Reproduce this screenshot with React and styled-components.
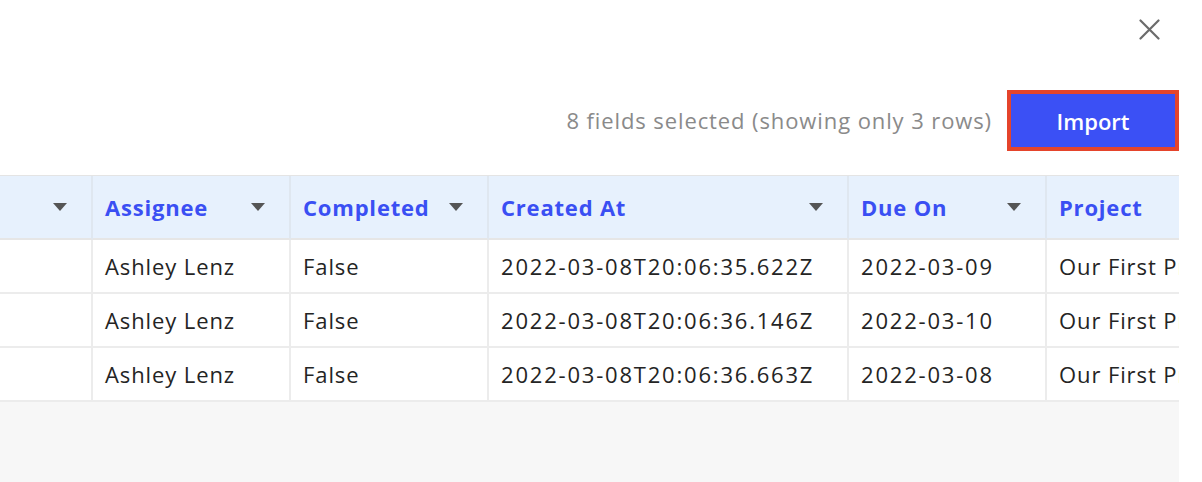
import React from 'react';
import styled, { createGlobalStyle } from 'styled-components';

const Global = createGlobalStyle`
  html, body { margin: 0; padding: 0; background: #fff; }
  body { font-family: "Open Sans", Lato, sans-serif; }
`;

const Page = styled.div`
  width: 1179px;
  height: 482px;
  display: flex;
  flex-direction: column;
  background: #fff;
`;

const TopBar = styled.div`
  height: 58px;
  display: flex;
  justify-content: flex-end;
  align-items: center;
  padding-right: 19px;
`;

const CloseBtn = styled.button`
  border: none;
  background: none;
  padding: 0;
  width: 21px;
  height: 21px;
  display: flex;
  cursor: pointer;
`;

const Toolbar = styled.div`
  height: 117px;
  display: flex;
  justify-content: flex-end;
  align-items: flex-start;
  gap: 15px;
  padding-top: 32px;
  box-sizing: border-box;
`;

const Info = styled.div`
  font-size: 22px;
  color: #8a8a8a;
  line-height: 61px;
  letter-spacing: 0.9px;
`;

const ImportBtn = styled.button`
  width: 172px;
  height: 61px;
  border: 4px solid #e5442b;
  background: #3b50f5;
  color: #fff;
  font-family: "Open Sans", sans-serif;
  font-size: 22px;
  font-weight: 600;
  cursor: pointer;
`;

const TableWrap = styled.div`
  overflow: hidden;
  border-top: 1px solid #e4e4e4;
  flex: 1;
  background: #f7f7f7;
`;

const Grid = styled.div`
  display: grid;
  grid-template-columns: 198px 198px 198px 360px 198px 240px;
  margin-left: -105px;
  width: max-content;
`;

const HeadCell = styled.div`
  height: 64px;
  box-sizing: border-box;
  background: #e7f1fd;
  border-right: 2px solid #dfe7f0;
  border-bottom: 2px solid #e6e6e6;
  display: flex;
  align-items: center;
  justify-content: space-between;
  padding: 0 24px 0 12px;
  font-size: 22px;
  font-weight: 700;
  color: #3a4ff3;
  letter-spacing: 0.8px;
`;

const Caret = styled.span`
  width: 0;
  height: 0;
  border-left: 7px solid transparent;
  border-right: 7px solid transparent;
  border-top: 8px solid #555;
`;

const Cell = styled.div`
  height: 54px;
  box-sizing: border-box;
  background: #fff;
  border-right: 2px solid #ececec;
  border-bottom: 2px solid #ececec;
  display: flex;
  align-items: center;
  padding: 0 12px;
  font-size: 22px;
  letter-spacing: ${(p) => (p.$numeric ? '1.8px' : '0.9px')};
  color: #242424;
  white-space: nowrap;
  overflow: hidden;
`;

const columns = [
  { name: 'Name', caret: true },
  { name: 'Assignee', caret: true },
  { name: 'Completed', caret: true },
  { name: 'Created At', caret: true },
  { name: 'Due On', caret: true },
  { name: 'Project', caret: false },
];

const rows = [
  ['', 'Ashley Lenz', 'False', '2022-03-08T20:06:35.622Z', '2022-03-09', 'Our First Project'],
  ['', 'Ashley Lenz', 'False', '2022-03-08T20:06:36.146Z', '2022-03-10', 'Our First Project'],
  ['', 'Ashley Lenz', 'False', '2022-03-08T20:06:36.663Z', '2022-03-08', 'Our First Project'],
];

const isNumeric = (v) => /^\d{4}-/.test(v);

export default function App() {
  return (
    <>
      <Global />
      <Page>
        <TopBar>
          <CloseBtn aria-label="Close">
            <svg width="21" height="21" viewBox="0 0 21 21">
              <path d="M1.5 1.5 L19.5 19.5 M19.5 1.5 L1.5 19.5" stroke="#6b6b6b" strokeWidth="2.2" strokeLinecap="round" />
            </svg>
          </CloseBtn>
        </TopBar>
        <Toolbar>
          <Info>8 fields selected (showing only 3 rows)</Info>
          <ImportBtn>Import</ImportBtn>
        </Toolbar>
        <TableWrap>
          <Grid>
            {columns.map((c, i) => (
              <HeadCell key={i}>
                <span>{i === 0 ? '' : c.name}</span>
                {c.caret && <Caret />}
              </HeadCell>
            ))}
            {rows.map((r, ri) =>
              r.map((v, ci) => (
                <Cell key={ri + '-' + ci} $numeric={isNumeric(v)}>{v}</Cell>
              ))
            )}
          </Grid>
        </TableWrap>
      </Page>
    </>
  );
}
